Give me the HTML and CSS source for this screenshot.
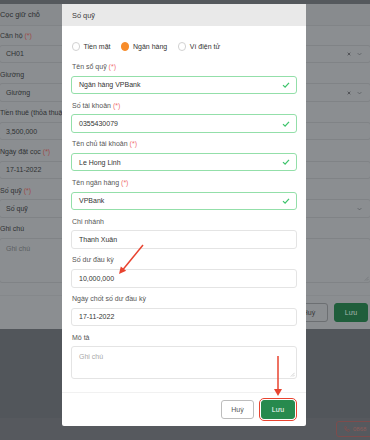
FILE: index.html
```html
<!DOCTYPE html>
<html lang="vi">
<head>
<meta charset="utf-8">
<title>Số quỹ</title>
<link rel="stylesheet" href="styles.css">
</head>
<body>
<div class="screen">
  <div class="topbar"></div>
  <div class="stage"></div>
  <div class="bottombar">
    <span class="phone-btn">
      <svg class="phone-ico" viewBox="0 0 10 10" width="6" height="6"><path d="M2 1 L3.6 1 L4.2 3 L3.1 3.8 Q4 5.9 6.2 6.9 L7 5.8 L9 6.4 L9 8 Q8.6 9 7.6 9 Q1 8.2 1 2 Q1 1 2 1 Z" fill="none" stroke="#8e4d4c" stroke-width="1"/></svg>
      <span>0868</span>
    </span>
  </div>

  <section class="modal modal-back">
    <header class="modal-head back-head">Cọc giữ chỗ</header>
    <div class="modal-body back-body">
      <div class="field">
        <div class="label">Căn hộ <span class="req">(*)</span></div>
        <div class="input">
          <span class="val">CH01</span>
          <span class="icons">
            <svg viewBox="0 0 6 6" width="4" height="4"><path d="M1 1 L5 5 M5 1 L1 5" stroke="#3f4144" stroke-width="1.1"/></svg>
            <svg viewBox="0 0 8 6" width="5" height="4"><path d="M1 1.5 L4 4.5 L7 1.5" fill="none" stroke="#4a4c4f" stroke-width="0.9"/></svg>
          </span>
        </div>
      </div>
      <div class="field">
        <div class="label">Giường</div>
        <div class="input">
          <span class="val">Giường</span>
          <span class="icons">
            <svg viewBox="0 0 6 6" width="4" height="4"><path d="M1 1 L5 5 M5 1 L1 5" stroke="#3f4144" stroke-width="1.1"/></svg>
            <svg viewBox="0 0 8 6" width="5" height="4"><path d="M1 1.5 L4 4.5 L7 1.5" fill="none" stroke="#4a4c4f" stroke-width="0.9"/></svg>
          </span>
        </div>
      </div>
      <div class="field">
        <div class="label">Tiền thuê (thỏa thuận) <span class="req">(*)</span></div>
        <div class="input"><span class="val">3,500,000</span></div>
      </div>
      <div class="field">
        <div class="label">Ngày đặt cọc <span class="req">(*)</span></div>
        <div class="input"><span class="val">17-11-2022</span></div>
      </div>
      <div class="field">
        <div class="label">Số quỹ <span class="req">(*)</span></div>
        <div class="input">
          <span class="val">Số quỹ</span>
          <span class="icons">
            <svg viewBox="0 0 8 6" width="5" height="4"><path d="M1 1.5 L4 4.5 L7 1.5" fill="none" stroke="#4a4c4f" stroke-width="0.9"/></svg>
          </span>
        </div>
      </div>
      <div class="field field-last">
        <div class="label">Ghi chú</div>
        <div class="input textarea back-textarea">
          <span class="ph">Ghi chú</span>
          <svg class="grip" viewBox="0 0 6 6" width="5" height="5"><path d="M5.5 1 L1 5.5 M5.5 3.5 L3.5 5.5" stroke="#6c6f72" stroke-width="0.7"/></svg>
        </div>
      </div>
    </div>
    <footer class="modal-foot back-foot">
      <button class="btn btn-wide">Huỷ</button>
      <button class="btn btn-primary">Lưu</button>
    </footer>
  </section>

  <section class="modal modal-front">
    <header class="modal-head front-head">Số quỹ</header>
    <div class="modal-body front-body">
      <div class="radios">
        <span class="radio"><span class="dot"></span>Tiền mặt</span>
        <span class="radio checked"><span class="dot"></span>Ngân hàng</span>
        <span class="radio"><span class="dot"></span>Ví điện tử</span>
      </div>
      <div class="field">
        <div class="label">Tên sổ quỹ <span class="req">(*)</span></div>
        <div class="input valid"><span class="val">Ngân hàng VPBank</span>
          <svg class="check" viewBox="0 0 10 8" width="8" height="6"><path d="M1 4.2 L3.8 6.8 L9 1.2" fill="none" stroke="#3ec46c" stroke-width="1.7"/></svg>
        </div>
      </div>
      <div class="field">
        <div class="label">Số tài khoản <span class="req">(*)</span></div>
        <div class="input valid"><span class="val">0355430079</span>
          <svg class="check" viewBox="0 0 10 8" width="8" height="6"><path d="M1 4.2 L3.8 6.8 L9 1.2" fill="none" stroke="#3ec46c" stroke-width="1.7"/></svg>
        </div>
      </div>
      <div class="field">
        <div class="label">Tên chủ tài khoản <span class="req">(*)</span></div>
        <div class="input valid"><span class="val">Le Hong Linh</span>
          <svg class="check" viewBox="0 0 10 8" width="8" height="6"><path d="M1 4.2 L3.8 6.8 L9 1.2" fill="none" stroke="#3ec46c" stroke-width="1.7"/></svg>
        </div>
      </div>
      <div class="field">
        <div class="label">Tên ngân hàng <span class="req">(*)</span></div>
        <div class="input valid"><span class="val">VPBank</span>
          <svg class="check" viewBox="0 0 10 8" width="8" height="6"><path d="M1 4.2 L3.8 6.8 L9 1.2" fill="none" stroke="#3ec46c" stroke-width="1.7"/></svg>
        </div>
      </div>
      <div class="field">
        <div class="label">Chi nhánh</div>
        <div class="input"><span class="val">Thanh Xuân</span></div>
      </div>
      <div class="field">
        <div class="label">Số dư đầu kỳ</div>
        <div class="input"><span class="val">10,000,000</span></div>
      </div>
      <div class="field">
        <div class="label">Ngày chốt số dư đầu kỳ</div>
        <div class="input"><span class="val">17-11-2022</span></div>
      </div>
      <div class="field field-last">
        <div class="label">Mô tả</div>
        <div class="input textarea front-textarea">
          <span class="ph">Ghi chú</span>
          <svg class="grip" viewBox="0 0 6 6" width="5" height="5"><path d="M5.5 1 L1 5.5 M5.5 3.5 L3.5 5.5" stroke="#b5b5b5" stroke-width="0.7"/></svg>
        </div>
      </div>
    </div>
    <footer class="modal-foot front-foot">
      <button class="btn">Huỷ</button>
      <button class="btn btn-primary btn-marked">Lưu</button>
    </footer>
  </section>

  <svg class="annot" viewBox="0 0 370 440" width="370" height="440">
    <line x1="143" y1="245" x2="123" y2="269.5" stroke="#e8432f" stroke-width="1.5"/>
    <polygon points="119,274 126.2,270.8 120.8,266.4" fill="#e8432f"/>
    <line x1="278" y1="356" x2="278" y2="390" stroke="#e8432f" stroke-width="1.5"/>
    <polygon points="278,396 274,389 282,389" fill="#e8432f"/>
  </svg>
</div>
</body>
</html>
```

FILE: styles.css
```css
* {
  box-sizing: border-box;
  margin: 0;
  padding: 0;
}

html, body {
  width: 370px;
  height: 440px;
  overflow: hidden;
}

body {
  font-family: "Liberation Sans", Arial, sans-serif;
  font-size: 7px;
  background: #52565b;
}

.screen {
  position: relative;
  width: 370px;
  height: 440px;
  display: flex;
  flex-direction: column;
  overflow: hidden;
}

.topbar {
  height: 4px;
  background: #55595d;
}

.stage {
  flex: 1;
  background: #52565b;
}

.bottombar {
  height: 22px;
  background: #56595e;
  display: flex;
  justify-content: flex-end;
  align-items: center;
}

.phone-btn {
  display: flex;
  align-items: center;
  gap: 3px;
  height: 16px;
  width: 44px;
  margin-right: -10px;
  padding-left: 7px;
  border: 1px solid #7d4c4c;
  border-radius: 3px;
  color: #8e5a58;
  font-size: 6px;
}

/* ---------- modals ---------- */
.modal {
  position: absolute;
  top: 4px;
  display: flex;
  flex-direction: column;
}

.modal-back {
  left: -10px;
  width: 390px;
  height: 325px;
  background: #8b8e91;
  color: #2f3133;
}

.modal-front {
  left: 62px;
  width: 244px;
  height: 422px;
  background: #ffffff;
  color: #333;
  border-radius: 0 0 2px 2px;
}

.modal-head {
  height: 22px;
  flex: none;
  display: flex;
  align-items: center;
  padding-left: 10px;
  font-size: 7.4px;
}

.back-head {
  background: #888b8e;
  border-bottom: 1px solid #818487;
  color: #2c2e30;
}

.front-head {
  background: #e9e9e9;
  color: #3a3a3a;
}

.modal-body {
  flex: 1;
  display: flex;
  flex-direction: column;
}

.back-body {
  padding: 5px 9px 12px;
}

.front-body {
  padding: 15.7px 9px 12px;
}

/* ---------- radios ---------- */
.radios {
  height: 10px;
  display: flex;
  align-items: center;
  gap: 10.5px;
  margin-bottom: 10.3px;
  padding-left: 0.5px;
  color: #333;
}

.radio {
  display: flex;
  align-items: center;
  gap: 3.5px;
}

.dot {
  width: 8.5px;
  height: 8.5px;
  border-radius: 50%;
  border: 1px solid #d2d2d2;
  background: #fff;
}

.radio.checked .dot {
  border-color: #f78c2a;
  background: #f78c2a;
}

/* ---------- fields ---------- */
.field {
  display: flex;
  flex-direction: column;
  margin-bottom: 6.6px;
}

.field-last {
  margin-bottom: 0;
}

.label {
  height: 10px;
  line-height: 10px;
  margin-bottom: 3.6px;
  padding-left: 1px;
  white-space: nowrap;
}

.front-body .label {
  color: #555;
}

.back-body .label {
  color: #2f3133;
}

.req {
  color: #f07272;
}

.back-body .req {
  color: #9c4c4a;
}

.input {
  position: relative;
  height: 18.5px;
  display: flex;
  align-items: center;
  justify-content: space-between;
  padding: 0 7px;
  border-radius: 3px;
  border: 1px solid #e4e4e4;
  white-space: nowrap;
}

.back-body .input {
  border-color: #808386;
  color: #2e3032;
  padding-left: 6px;
}

.front-body .input {
  color: #333;
}

.input.valid {
  border-color: #93dfa9;
}

.check {
  margin-right: -1px;
}

.icons {
  display: flex;
  align-items: center;
  gap: 6px;
  margin-right: 1px;
}

.textarea {
  align-items: flex-start;
  padding-top: 5px;
}

.back-textarea {
  height: 45px;
}

.front-textarea {
  height: 33px;
}

.ph {
  line-height: 10px;
}

.front-body .ph {
  color: #a9a9a9;
}

.back-body .ph {
  color: #5b5e61;
}

.grip {
  position: absolute;
  right: 1px;
  bottom: 1px;
}

/* ---------- footer ---------- */
.modal-foot {
  flex: none;
  display: flex;
  justify-content: flex-end;
  gap: 7px;
  padding: 7.4px 11px 7px;
}

.back-foot {
  border-top: 1px solid #85888b;
  padding-right: 12px;
  gap: 6px;
}

.front-foot {
  border-top: 1px solid #f1f1f1;
}

.btn {
  height: 19px;
  width: 33px;
  border-radius: 3px;
  border: 1px solid #bdbdbd;
  background: #fff;
  color: #555;
  font-family: inherit;
  font-size: 7px;
}

.back-foot .btn {
  background: #8b8e91;
  border-color: #6c6f72;
  color: #36383a;
}

.btn-wide {
  width: 38px;
}

.btn-primary {
  width: 34px;
  background: #278a4e;
  border-color: #278a4e;
  color: #fff;
}

.back-foot .btn-primary {
  background: #1f5e3b;
  border-color: #1f5e3b;
  color: #a6b8ad;
}

.btn-marked {
  outline: 1px solid #e8432f;
  outline-offset: 1px;
}

/* ---------- annotations ---------- */
.annot {
  position: absolute;
  left: 0;
  top: 0;
  pointer-events: none;
}
```
